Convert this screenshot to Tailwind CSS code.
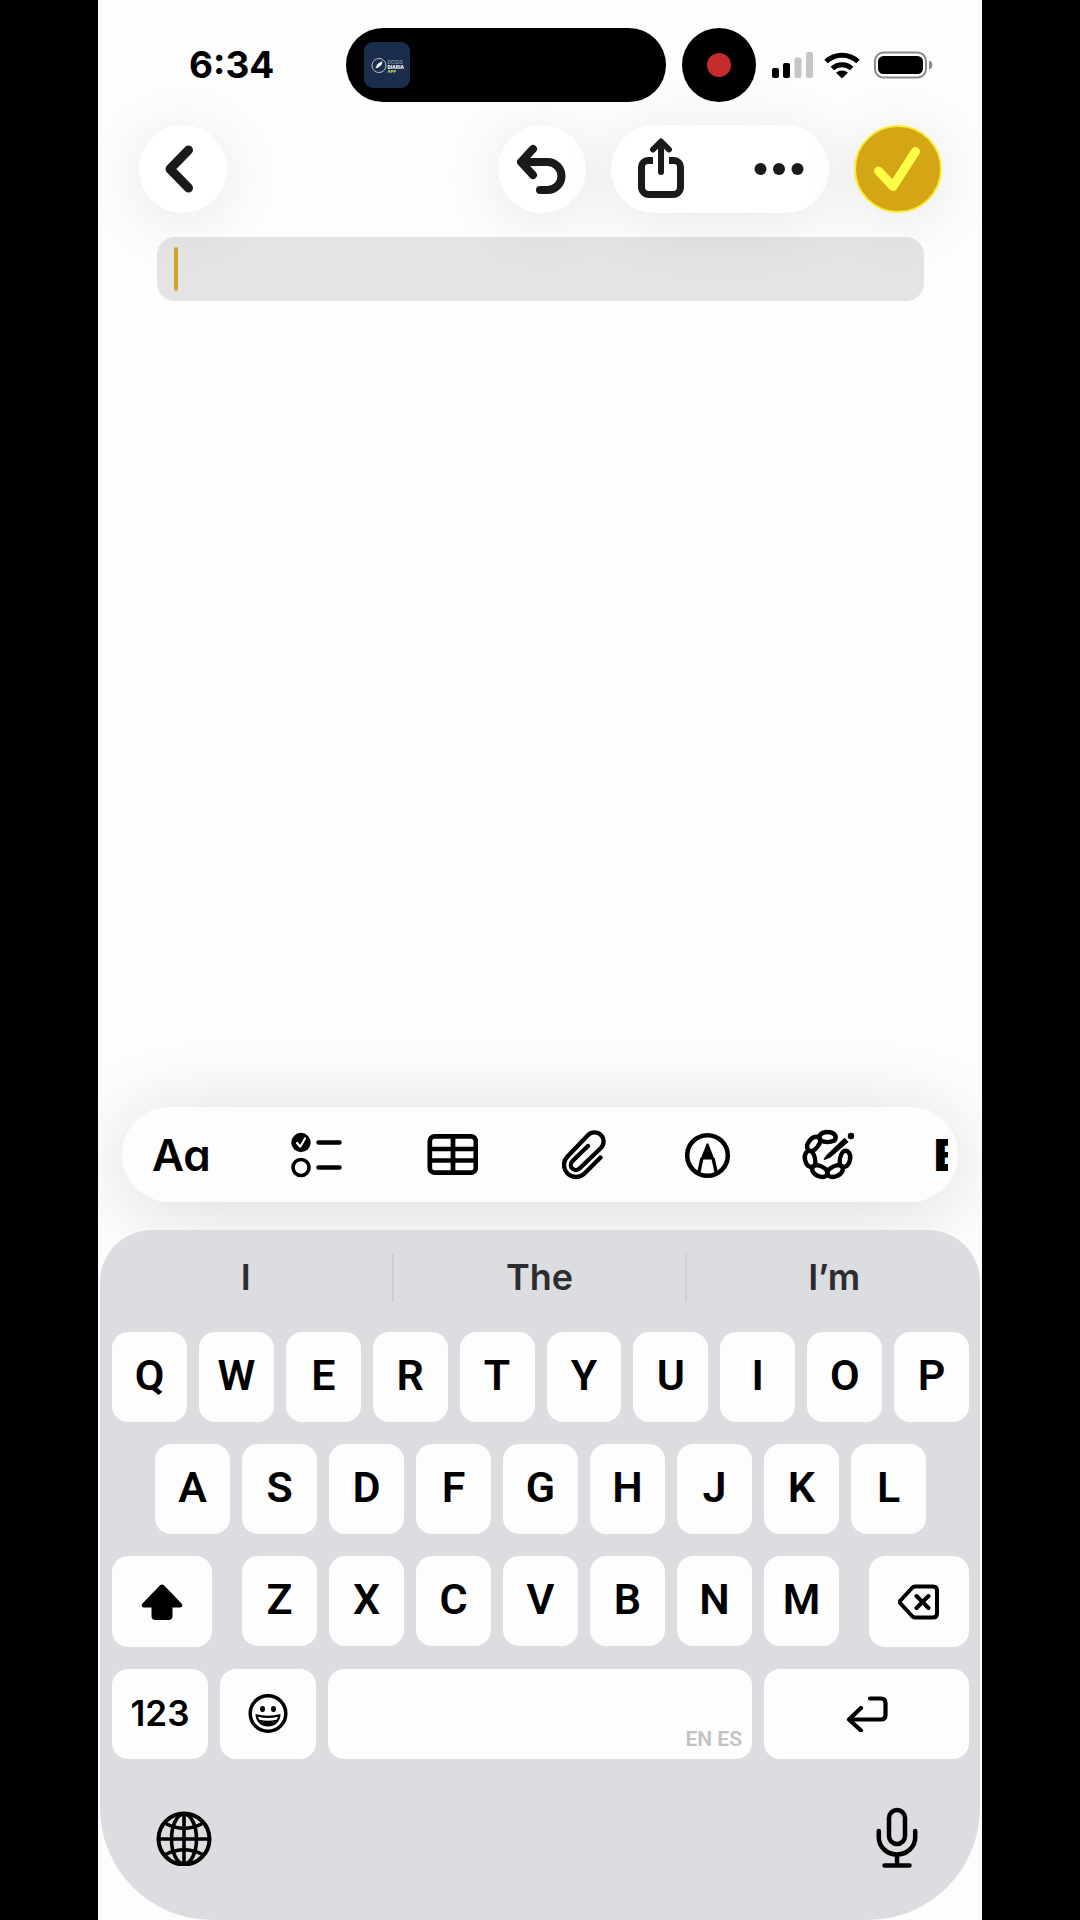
<!DOCTYPE html>
<html lang="en">
<head>
  <meta charset="UTF-8" />
  <meta name="viewport" content="width=device-width, initial-scale=1.0"/>
  <title>Notes</title>
  <script src="https://cdn.jsdelivr.net/npm/@tailwindcss/browser@4"></script>
  <style>
    body { font-family: Inter, 'Liberation Sans', sans-serif; }
  </style>
</head>
<body class="bg-black min-h-screen flex justify-center">

  <div class="w-full max-w-[884px] min-h-screen bg-[#fdfdfd] flex flex-col overflow-hidden">

    <!-- Status bar -->
    <header class="h-[125px] pt-7 pl-[91px] flex items-start">
      <div class="h-[74px] w-[157px] flex items-center text-[37px] font-bold text-black">6:34</div>
      <div class="w-80 h-[74px] mr-4 px-[17px] rounded-full bg-black flex items-center">
        <svg class="w-12 h-12" viewBox="0 0 48 48">
          <rect x="1" y="1" width="46" height="46" rx="9" fill="#1b2d4d"/>
          <circle cx="16" cy="24.500" r="7" fill="none" stroke="#b9c2b4" stroke-width="1"/>
          <path d="M12.500 27l2-4 5-3-1 4-4 3z" fill="#fff"/>
          <text x="24.500" y="22.500" font-size="5" fill="#a9b2bf">DOSIS</text>
          <text x="24.500" y="27.500" font-size="5" font-weight="800" fill="#fff" font-family="Roboto, sans-serif">DIARIA</text>
          <text x="24.500" y="31.500" font-size="4" font-weight="800" fill="#c9d86a">APP</text>
        </svg>
      </div>
      <div class="w-[74px] h-[74px] mr-4 rounded-full bg-black flex items-center justify-center">
        <span class="size-6 rounded-full bg-[#c42b2d]"></span>
      </div>
      <div class="h-[74px] flex items-center gap-[10px]">
        <svg class="w-[42px] h-7" viewBox="0 0 42 28">
          <rect x="0" y="17" width="7" height="10" rx="2"/>
          <rect x="11" y="12" width="7" height="15" rx="2"/>
          <rect x="22.500" y="6.500" width="7" height="20.500" rx="2" fill="#c6c6c6"/>
          <rect x="34" y="1" width="7" height="26" rx="2" fill="#c6c6c6"/>
        </svg>
        <svg class="w-9 h-7" viewBox="0 0 36 28">
          <path d="M2 10.500a23.500 23.500 0 0 1 32 0M8.300 17.500a14.500 14.500 0 0 1 19.400 0" fill="none" stroke="#000" stroke-width="5"/>
          <path d="M18 27.500l-6-5.700a9 9 0 0 1 12 0z"/>
        </svg>
        <svg class="w-[60px] h-7 ml-1" viewBox="0 0 60 28">
          <rect x="1" y="1.500" width="51" height="25" rx="8.500" fill="none" stroke="#8b8b8b" stroke-width="2"/>
          <rect x="4" y="5" width="45" height="18" rx="5.500"/>
          <path d="M55 9.500c4.500 1.500 4.500 7.500 0 9z" fill="#8b8b8b"/>
        </svg>
      </div>
    </header>

    <!-- Top toolbar -->
    <div class="relative z-10 pl-[41px] pr-10 flex items-center gap-[25px] text-[#1a1a1a]">
      <button aria-label="Back" class="size-[88px] mr-auto rounded-full bg-white flex items-center justify-center shadow-[0_8px_64px_rgba(0,0,0,0.09)]">
        <svg class="w-9 h-12" viewBox="0 0 36 48" fill="none" stroke="currentColor" stroke-width="9" stroke-linecap="round" stroke-linejoin="round"><path d="M23.500 5L5 24l18.500 19"/></svg>
      </button>
      <button aria-label="Undo" class="size-[88px] rounded-full bg-white flex items-center justify-center shadow-[0_8px_64px_rgba(0,0,0,0.09)]">
        <svg class="size-14" viewBox="0 0 56 56" fill="none" stroke="currentColor" stroke-width="8" stroke-linecap="round" stroke-linejoin="round"><path d="M19 8L7 21l12 13M8 21h25.500a14 14 0 0 1 0 28H26"/></svg>
      </button>
      <div class="w-[218px] h-[88px] rounded-full bg-white flex justify-between shadow-[0_8px_64px_rgba(0,0,0,0.09)]">
        <button aria-label="Share" class="w-[100px] flex items-center justify-center">
          <svg class="w-[54px] h-[66px]" viewBox="0 0 54 66" fill="none" stroke="currentColor" stroke-width="7"><path d="M19 24.500h-5a6.500 6.500 0 0 0-6.500 6.500v20a7.500 7.500 0 0 0 7.500 7.500h24a7.500 7.500 0 0 0 7.500-7.500V31a6.500 6.500 0 0 0-6.500-6.500h-5"/><path d="M27 6.500V36M19 13.500l8-8 8 8" stroke-width="6" stroke-linecap="round" stroke-linejoin="round"/></svg>
        </button>
        <button aria-label="More" class="w-[100px] flex items-center justify-center">
          <svg class="w-[50px] h-3" viewBox="0 0 50 12" fill="currentColor"><circle cx="6.500" cy="6" r="6"/><circle cx="25" cy="6" r="6"/><circle cx="43.500" cy="6" r="6"/></svg>
        </button>
      </div>
      <button aria-label="Done" class="size-[88px] rounded-full bg-[#d4a514] border-2 border-[#f8ee38] text-[#ffff48] flex items-center justify-center shadow-[0_8px_64px_rgba(0,0,0,0.09)]">
        <svg class="w-12 h-12" viewBox="0 0 48 48" fill="none" stroke="currentColor" stroke-width="9" stroke-linecap="round" stroke-linejoin="round"><path d="M4.500 26L19 41.500 41.500 6.500"/></svg>
      </button>
    </div>

    <!-- Note -->
    <main class="flex-1 pt-6 pl-[59px] pr-[58px]">
      <div class="relative">
        <input type="text" aria-label="Note title" class="block w-full h-16 px-4 rounded-[18px] bg-[#e4e4e4] text-[36px] text-black outline-none" />
        <span class="absolute left-[17px] top-[10px] w-1 h-11 rounded-full bg-[#cfa62a]"></span>
      </div>
    </main>

    <!-- Format bar -->
    <div class="mx-6 mb-7 h-[95px] pl-[30px] pr-[10px] rounded-full bg-[#fdfdfd] flex items-center justify-between text-black shadow-[0_8px_80px_rgba(0,0,0,0.14)]">
      <div class="flex items-center gap-[84px]">
        <button aria-label="Text style" class="w-[54px] text-[44px] leading-none font-semibold [font-feature-settings:'cv11']">Aa</button>
        <button aria-label="Checklist">
          <svg class="w-[52px] h-12" viewBox="0 0 52 48" fill="none" stroke="currentColor" stroke-linecap="round" stroke-linejoin="round"><circle cx="11" cy="11.500" r="9.700" fill="currentColor" stroke="none"/><path d="M7 12l3.200 3.700L15 7.500" stroke="#fff" stroke-width="2.200"/><circle cx="11" cy="36.500" r="8" stroke-width="3.600"/><path d="M28.500 11.500H49.500M28.500 36.500H49.500" stroke-width="4.500"/></svg>
        </button>
        <button aria-label="Table">
          <svg class="w-[52px] h-12" viewBox="0 0 52 48" fill="none" stroke="currentColor" stroke-width="4.700"><rect x="3.800" y="5.300" width="46" height="36.400" rx="5"/><path d="M27 5v37M3 18h47M3 29.500h47"/></svg>
        </button>
        <button aria-label="Attach">
          <svg class="w-11 h-[52px]" viewBox="0 0 44 52" fill="none" stroke="currentColor" stroke-width="4.300" stroke-linecap="round" stroke-linejoin="round"><path d="M38.500 28.500l-16 16a12 12 0 0 1-17-17L26.100 6.100a9 9 0 0 1 12.800 12.800L17.500 39.500a5 5 0 0 1-7.200-7.200L26 17"/></svg>
        </button>
      </div>
      <div class="flex items-center gap-[73px]">
        <button aria-label="Markup">
          <svg class="w-[46px] h-12" viewBox="0 0 46 48"><circle cx="22.500" cy="24.500" r="20.300" fill="none" stroke="currentColor" stroke-width="4.500"/><path d="M21.300 13.500q1.200-2.500 2.400 0L29.500 28.500h-14z"/><path d="M17 27l-3.300 15M28 27l3.300 15" fill="none" stroke="currentColor" stroke-width="3.400"/></svg>
        </button>
        <button aria-label="Writing tools">
          <svg class="w-[52px] h-[52px] overflow-visible" viewBox="0 0 52 52">
            <defs>
              <path id="lobe" d="M-6.900-14.400C-10.500-19-6-23 0-23S10.500-19 6.900-14.400M-6.900-14.400C-3-12.600 3-12.600 6.900-14.400"/>
            </defs>
            <g fill="none" stroke="currentColor" stroke-width="4.400" stroke-linecap="round" transform="translate(23.500 26)">
              <use href="#lobe"/>
              <use href="#lobe" transform="rotate(-51.400)"/>
              <use href="#lobe" transform="rotate(-102.900)"/>
              <use href="#lobe" transform="rotate(-154.300)"/>
              <use href="#lobe" transform="rotate(-205.700)"/>
              <use href="#lobe" transform="rotate(-257.100)"/>
            </g>
            <path d="M22.500 26L40.500 8.800l4 4.300L26.500 28.500 20.500 31q-1.200 0-.8-1z" stroke="#fdfdfd" stroke-width="3" paint-order="stroke"/>
            <circle cx="47" cy="7" r="3.200"/>
          </svg>
        </button>
      </div>
      <button aria-label="Bold" class="w-[14px] overflow-hidden text-left text-[44px] leading-none font-black">B</button>
    </div>

    <!-- Keyboard -->
    <section class="mx-0.5 h-[690px] pl-3 pr-[11px] rounded-t-[52px] rounded-b-[112px] bg-[#dcdde0] text-black">
      <div class="-mx-3 h-[102px] pt-6 grid grid-cols-3 text-[36px] leading-none font-semibold text-[#2d2d31]">
        <button class="h-12 pb-0.5 border-r-2 border-[#cdced1]">I</button>
        <button class="h-12 pb-0.5 border-r-2 border-[#cdced1]">The</button>
        <button class="h-12 pb-0.5">I’m</button>
      </div>

      <div class="flex flex-col gap-[22px]">
        <div id="rowTop" class="flex gap-3"></div>
        <div id="rowHome" class="flex gap-3 px-[43px]"></div>
        <div class="flex gap-[30px]">
          <button aria-label="Shift" class="w-[100px] h-[91px] rounded-2xl bg-[#fdfdfd] flex items-center justify-center">
            <svg class="w-[42px] h-9" viewBox="0 0 42 36"><path d="M19 1.200q2-1.500 4 0L40.500 19.500c1.500 2 .8 4-1.500 4h-7.500V32q0 4-4 4h-13q-4 0-4-4v-8.500H3c-2.300 0-3-2-1.500-4z"/></svg>
          </button>
          <div id="rowBottom" class="flex-1 flex gap-3"></div>
          <button aria-label="Delete" class="w-[100px] h-[91px] rounded-2xl bg-[#fdfdfd] flex items-center justify-center">
            <svg class="w-[42px] h-9" viewBox="0 0 42 36" fill="none" stroke="currentColor" stroke-width="4" stroke-linecap="round" stroke-linejoin="round"><path d="M17 2.500H35q4 0 4 4v23q0 4-4 4H17q-1.500 0-3-1.500L2.500 19.500q-1.500-1.500 0-3L14 4Q15.500 2.500 17 2.500zM18.500 12l12 12M30.500 12L18.500 24"/></svg>
          </button>
        </div>
        <div class="flex gap-3">
          <button class="w-24 h-[90px] rounded-2xl bg-[#fdfdfd] pb-0.5 text-[35px] font-semibold">123</button>
          <button aria-label="Emoji" class="w-24 h-[90px] rounded-2xl bg-[#fdfdfd] flex items-center justify-center">
            <svg class="size-10" viewBox="0 0 40 40"><circle cx="20" cy="19.500" r="17.800" fill="none" stroke="currentColor" stroke-width="3.500"/><ellipse cx="14.500" cy="15" rx="2.500" ry="3"/><ellipse cx="25.500" cy="15" rx="2.500" ry="3"/><path d="M7.500 20q12.500 3.500 25 0c0 7-5 12.500-12.500 12.500S7.500 27 7.500 20z"/><path d="M10 22.800q10 2.400 20 0-.5 2-1.500 3-8.500 2-17 0Q10.500 24.800 10 22.800z" fill="#fdfdfd"/></svg>
          </button>
          <button aria-label="Space" class="flex-1 h-[90px] rounded-2xl bg-[#fdfdfd] pr-[10px] pb-1.5 flex items-end justify-end text-[21px] leading-7 font-semibold text-[#c3c3c5] font-['Roboto',sans-serif]">EN ES</button>
          <button aria-label="Return" class="w-[205px] h-[90px] rounded-2xl bg-[#fdfdfd] flex items-center justify-center">
            <svg class="w-[42px] h-9" viewBox="0 0 42 36" fill="none" stroke="currentColor" stroke-width="4.200" stroke-linecap="round" stroke-linejoin="round"><path d="M24 2.500h11q4.500 0 4.500 4.500v12q0 4.500-4.500 4.500H3M15 12L3 23.500 15 34.500"/></svg>
          </button>
        </div>
      </div>

      <div class="pt-12 px-11 flex items-center justify-between">
        <button aria-label="Next keyboard">
          <svg class="size-14" viewBox="0 0 56 56" fill="none" stroke="currentColor" stroke-width="3.600"><circle cx="28" cy="29" r="25.500" stroke-width="4"/><path d="M28 4v50M3 29h50"/><ellipse cx="28" cy="29" rx="12.500" ry="25"/><path d="M9.500 13.500q18.500 9.500 37 0M9.500 44.500q18.500-9.500 37 0"/></svg>
        </button>
        <button aria-label="Dictate">
          <svg class="w-[42px] h-[62px] mr-[7px]" viewBox="0 0 42 62" fill="none" stroke="currentColor" stroke-width="4.500" stroke-linecap="round"><rect x="13" y="3" width="16" height="34" rx="8"/><path d="M2.800 24v6.500a18.200 17 0 0 0 36.400 0V24M21 48v9M8.500 58.500h25"/></svg>
        </button>
      </div>
    </section>

  </div>

  <script>
    function fillRow(id, letters) {
      let html = '';
      letters.split('').forEach(letter => {
        html += `<button class="flex-1 min-w-0 h-[90px] pb-1 rounded-2xl bg-[#fdfdfd] font-['Roboto',sans-serif] text-[43px] leading-none font-semibold">${letter}</button>`;
      });
      document.getElementById(id).innerHTML = html;
    }

    fillRow('rowTop', 'QWERTYUIOP');
    fillRow('rowHome', 'ASDFGHJKL');
    fillRow('rowBottom', 'ZXCVBNM');
  </script>
</body>
</html>
